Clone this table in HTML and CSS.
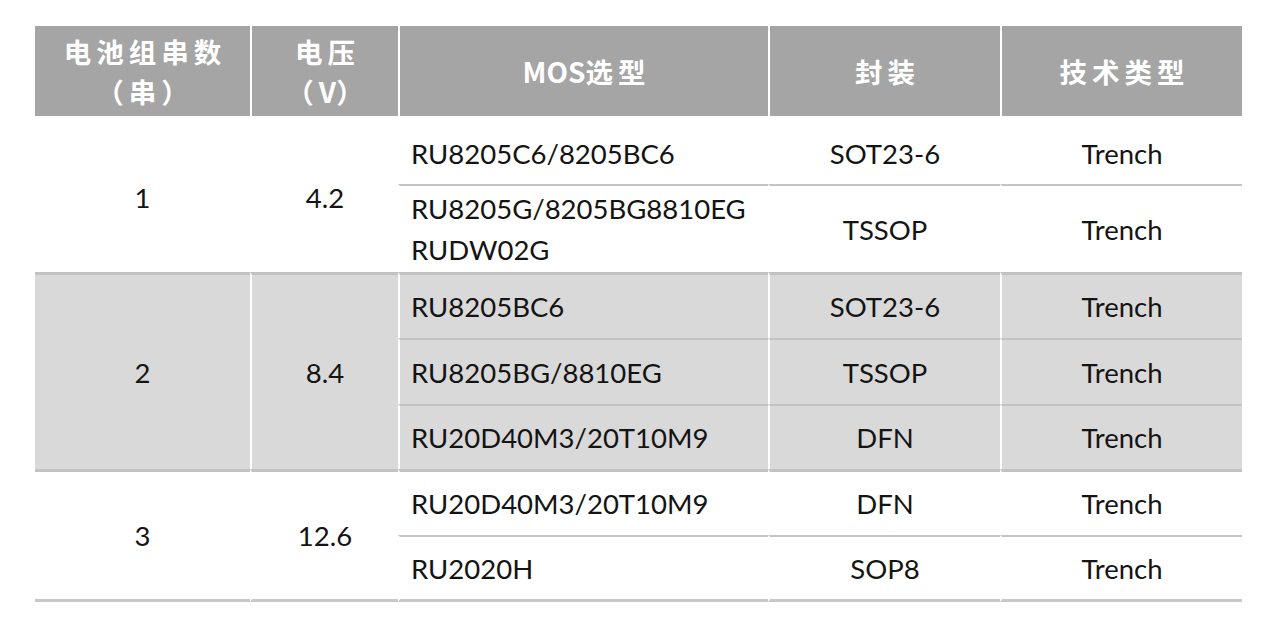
FILE: index.html
```html
<!DOCTYPE html>
<html lang="zh-CN">
<head>
<meta charset="utf-8">
<title>MOS选型表</title>
<link rel="stylesheet" href="styles.css">
</head>
<body>
<div class="page">
  <table class="spec">
    <colgroup>
      <col class="w1"><col class="w2"><col class="w3"><col class="w4"><col class="w5">
    </colgroup>
    <thead>
      <tr>
        <th><span class="hl">电池组串数</span><span class="hl">（串）</span></th>
        <th class="div"><span class="hl">电压</span><span class="hl">（<span class="lat">V</span>）</span></th>
        <th class="div"><span class="lat">MOS</span>选型</th>
        <th class="div">封装</th>
        <th class="div">技术类型</th>
      </tr>
    </thead>
    <tbody class="g g1">
      <tr class="r68">
        <td rowspan="2" class="num">1</td>
        <td rowspan="2" class="num div">4.2</td>
        <td class="part div">RU8205C6/8205BC6</td>
        <td class="pkg div">SOT23-6</td>
        <td class="tech div">Trench</td>
      </tr>
      <tr class="r88 inner">
        <td class="part div">RU8205G/8205BG8810EG<br>RUDW02G</td>
        <td class="pkg div">TSSOP</td>
        <td class="tech div">Trench</td>
      </tr>
    </tbody>
    <tbody class="g g2 shade">
      <tr class="r66 first">
        <td rowspan="3" class="num">2</td>
        <td rowspan="3" class="num div">8.4</td>
        <td class="part div">RU8205BC6</td>
        <td class="pkg div">SOT23-6</td>
        <td class="tech div">Trench</td>
      </tr>
      <tr class="r66 inner">
        <td class="part div">RU8205BG/8810EG</td>
        <td class="pkg div">TSSOP</td>
        <td class="tech div">Trench</td>
      </tr>
      <tr class="r65 inner">
        <td class="part div">RU20D40M3/20T10M9</td>
        <td class="pkg div">DFN</td>
        <td class="tech div">Trench</td>
      </tr>
    </tbody>
    <tbody class="g g3">
      <tr class="r66 first">
        <td rowspan="2" class="num last">3</td>
        <td rowspan="2" class="num div last">12.6</td>
        <td class="part div">RU20D40M3/20T10M9</td>
        <td class="pkg div">DFN</td>
        <td class="tech div">Trench</td>
      </tr>
      <tr class="r67 inner">
        <td class="part div last">RU2020H</td>
        <td class="pkg div last">SOP8</td>
        <td class="tech div last">Trench</td>
      </tr>
    </tbody>
  </table>
</div>
</body>
</html>
```

FILE: styles.css
```css
html, body {
  margin: 0;
  padding: 0;
  background: #ffffff;
}

.page {
  padding: 26px 0 0 35px;
}

.spec {
  border-collapse: separate;
  border-spacing: 0;
  table-layout: fixed;
  width: 1207px;
  font-family: "Lato", "Noto Sans CJK SC", sans-serif;
  font-size: 27.5px;
  color: #141414;
}

.w1 { width: 215px; }
.w2 { width: 148px; }
.w3 { width: 370px; }
.w4 { width: 232px; }
.w5 { width: 242px; }

.spec th {
  height: 90px;
  padding: 0 0 0 5px;
  background: #a5a5a5;
  color: #ffffff;
  font-family: "Noto Sans CJK SC", "Noto Sans", sans-serif;
  font-weight: 700;
  font-size: 27.5px;
  line-height: 40px;
  letter-spacing: 5px;
  text-align: center;
  vertical-align: middle;
  box-sizing: border-box;
}

.spec th .hl {
  display: block;
  height: 40px;
  line-height: 40px;
}

.spec th .lat {
  letter-spacing: 0;
  font-size: 28px;
}

.spec td {
  padding: 0;
  line-height: 41px;
  vertical-align: middle;
  text-align: center;
}

.spec .div {
  border-left: 2px solid #ffffff;
}

.spec .part {
  text-align: left;
  padding-left: 11px;
}

.shade td {
  background: #d9d9d9;
}

.r68 { height: 68px; }
.r88 { height: 88px; }
.r66 { height: 66px; }
.r65 { height: 65px; }
.r67 { height: 67px; }

.g1 .r68 td {
  padding-top: 6px;
}

.inner td {
  border-top: 2px solid #c4c4c4;
}

.first td {
  border-top: 3px solid #c2c2c2;
}

.spec td.last {
  border-bottom: 3px solid #c8c8c8;
}
```
